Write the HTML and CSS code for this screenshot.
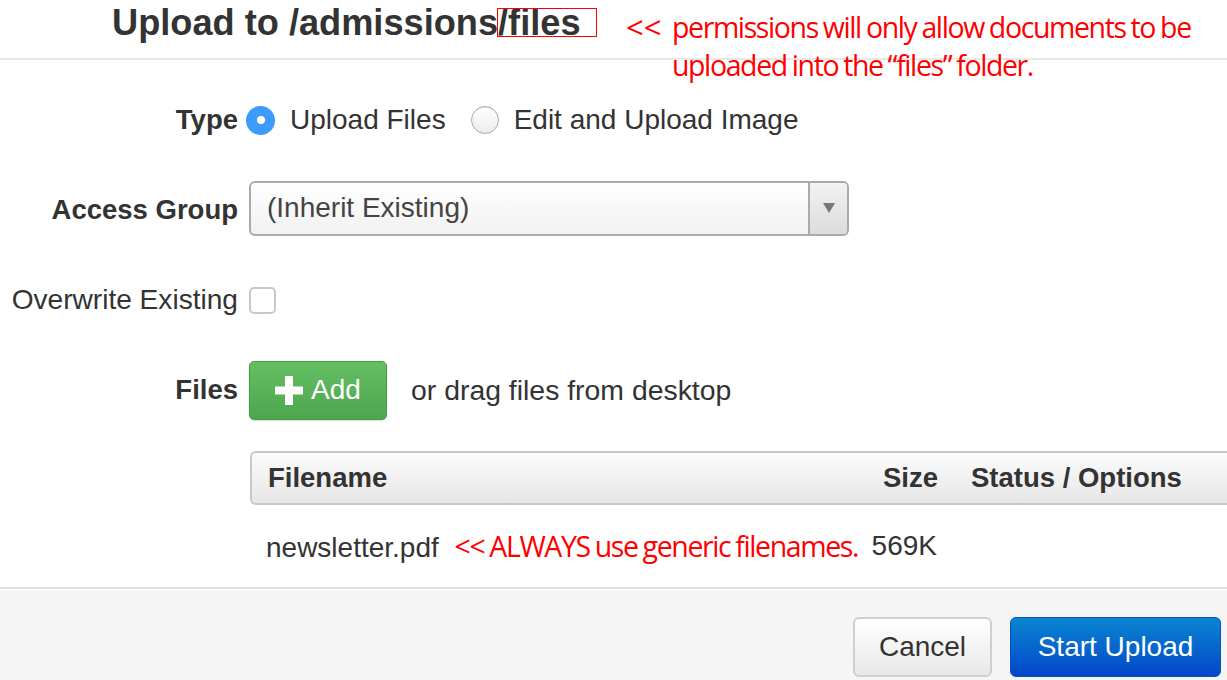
FILE: index.html
```html
<!DOCTYPE html>
<html>
<head>
<meta charset="utf-8">
<link rel="stylesheet" href="styles.css">
</head>
<body>
<div class="modal">
  <header class="modal-header">
    <h1 class="title">Upload to /admissions<span class="boxed">/files</span></h1>
    <div class="note note-top"><span class="note-arrows">&lt;&lt;</span><span class="note-text">permissions will only allow documents to be<br>uploaded into the “files” folder.</span></div>
  </header>

  <section class="form">
    <div class="row">
      <div class="label">Type</div>
      <div class="radios">
        <label class="opt"><span class="radio checked"></span><span>Upload Files</span></label>
        <label class="opt"><span class="radio"></span><span>Edit and Upload Image</span></label>
      </div>
    </div>
    <div class="row">
      <div class="label">Access Group</div>
      <div class="select">
        <span class="select-text">(Inherit Existing)</span>
        <span class="select-arrow"><span class="tri"></span></span>
      </div>
    </div>
    <div class="row">
      <div class="label normal">Overwrite Existing</div>
      <span class="checkbox"></span>
    </div>
    <div class="row">
      <div class="label">Files</div>
      <button class="btn-add"><svg class="plus" viewBox="0 0 28 29" width="28" height="29"><rect x="10" y="0" width="8" height="29" fill="#fff"/><rect x="0" y="10.5" width="28" height="8" fill="#fff"/></svg><span>Add</span></button>
      <span class="drag">or drag files from desktop</span>
    </div>
  </section>

  <section class="table">
    <div class="thead">
      <div class="c-name">Filename</div>
      <div class="c-size">Size</div>
      <div class="c-status">Status / Options</div>
    </div>
    <div class="trow">
      <div class="c-name">newsletter.pdf <span class="note note-inline">&lt;&lt; ALWAYS use generic filenames.</span></div>
      <div class="c-size">569K</div>
      <div class="c-status"></div>
    </div>
  </section>

  <footer class="modal-footer">
    <button class="btn btn-cancel">Cancel</button>
    <button class="btn btn-primary">Start Upload</button>
  </footer>
</div>
</body>
</html>
```

FILE: styles.css
```css
html, body {
  margin: 0;
  padding: 0;
}
body {
  width: 1227px;
  height: 680px;
  overflow: hidden;
  background: #fff;
  color: #333;
  font-family: "Liberation Sans", Arial, sans-serif;
}
.modal {
  width: 1227px;
  height: 680px;
  display: flex;
  flex-direction: column;
}

/* header */
.modal-header {
  position: relative;
  height: 58px;
  border-bottom: 2px solid #e8e8e8;
  padding-left: 112px;
  flex: none;
}
.title {
  margin: 0;
  padding-top: 5px;
  font-size: 36.2px;
  line-height: 36px;
  font-weight: bold;
  color: #333;
}
.boxed {
  position: relative;
  padding-right: 16px;
}
.boxed::after {
  content: "";
  position: absolute;
  left: -1px;
  right: 0;
  top: 6px;
  height: 27px;
  border: 1px solid #ff0000;
}

/* red annotations */
.note {
  font-family: "Open Sans", "Liberation Sans", sans-serif;
  color: #ff0000;
  font-size: 28.5px;
  letter-spacing: -1.4px;
  word-spacing: -1px;
}
.note-top {
  position: absolute;
  left: 626px;
  top: 8px;
  line-height: 38px;
  display: flex;
  white-space: nowrap;
}
.note-arrows {
  width: 46px;
  flex: none;
  letter-spacing: 0;
  font-size: 31px;
}

/* form */
.form {
  padding-top: 15px;
  flex: none;
}
.row {
  display: flex;
  align-items: center;
  height: 90px;
  gap: 11px;
}
.label {
  width: 238px;
  flex: none;
  text-align: right;
  font-size: 27.5px;
  font-weight: bold;
  color: #333;
}
.label.normal {
  font-weight: normal;
  font-size: 28.1px;
}
.radios {
  display: flex;
  align-items: center;
  gap: 25px;
  margin-left: -3px;
  font-size: 28px;
}
.opt {
  display: flex;
  align-items: center;
  gap: 15px;
}
.radio {
  width: 28px;
  height: 28px;
  border-radius: 50%;
  box-sizing: border-box;
  border: 1px solid #aaa;
  background: linear-gradient(#fff, #ececec);
  box-shadow: inset 0 1px 1px rgba(0,0,0,0.08);
  position: relative;
  flex: none;
}
.radio.checked {
  border: none;
  width: 29px;
  height: 29px;
  background: #3d9bfb;
  box-shadow: none;
}
.radio.checked::after {
  content: "";
  position: absolute;
  left: 10.5px;
  top: 10.5px;
  width: 8px;
  height: 8px;
  border-radius: 50%;
  background: #fff;
}

.select {
  width: 600px;
  height: 55px;
  margin-bottom: 4px;
  box-sizing: border-box;
  border: 2px solid #aaa;
  border-radius: 6px;
  background: linear-gradient(#fff, #f1f1f1);
  display: flex;
  align-items: stretch;
  overflow: hidden;
}
.select-text {
  flex: 1;
  display: flex;
  align-items: center;
  padding-left: 16px;
  font-size: 28px;
  color: #444;
}
.select-arrow {
  width: 37px;
  border-left: 2px solid #aaa;
  background: linear-gradient(#f2f2f2, #dcdcdc);
  display: flex;
  align-items: center;
  justify-content: center;
}
.tri {
  width: 0;
  height: 0;
  border-left: 6px solid transparent;
  border-right: 6px solid transparent;
  border-top: 10px solid #777;
}

.checkbox {
  width: 27px;
  height: 27px;
  box-sizing: border-box;
  border: 2px solid #c8c8c8;
  border-radius: 5px;
  background: #fff;
}

.btn-add {
  width: 138px;
  height: 59px;
  box-sizing: border-box;
  border: 1px solid #4a9a4a;
  border-radius: 5px;
  background: linear-gradient(#64c064, #4ea54e);
  color: #fff;
  font-family: "Liberation Sans", Arial, sans-serif;
  font-size: 28px;
  display: flex;
  align-items: center;
  padding: 0 0 0 25px;
  gap: 8px;
  box-shadow: 0 1px 2px rgba(0,0,0,0.15);
}
.plus {
  flex: none;
}
.drag {
  margin-left: 13px;
  font-size: 28.4px;
  color: #333;
}

/* table */
.table {
  margin: 16px 0 0 250px;
  width: 1000px;
  flex: none;
}
.thead {
  height: 50px;
  border: 2px solid #c8c8c8;
  border-right: none;
  border-radius: 6px 0 0 6px;
  background: linear-gradient(#fbfbfb, #e7e7e7);
  display: grid;
  grid-template-columns: 608px 78px 1fr;
  align-items: center;
  font-weight: bold;
  font-size: 27.5px;
  color: #333;
}
.thead .c-name {
  padding-left: 16px;
}
.c-size {
  text-align: right;
}
.c-status {
  padding-left: 33px;
}
.trow {
  height: 82px;
  display: grid;
  grid-template-columns: 610px 77px 1fr;
  align-items: center;
  font-size: 28px;
  color: #333;
}
.trow .c-name {
  padding-left: 16px;
  white-space: nowrap;
}
.note-inline {
  margin-left: 8px;
}

/* footer */
.modal-footer {
  flex: 1;
  border-top: 2px solid #dedede;
  box-shadow: inset 0 1px 0 #fff;
  background: #f5f5f5;
  display: flex;
  justify-content: flex-end;
  align-items: flex-start;
  gap: 18px;
  padding: 28px 6px 0 0;
}
.btn {
  height: 60px;
  box-sizing: border-box;
  border-radius: 6px;
  font-family: "Liberation Sans", Arial, sans-serif;
  font-size: 28px;
}
.btn-cancel {
  width: 139px;
  border: 2px solid #cfcfcf;
  background: linear-gradient(#fff, #e8e8e8);
  color: #333;
}
.btn-primary {
  width: 211px;
  border: 1px solid #0a4fb8;
  background: linear-gradient(#0a86d2, #0347c8);
  color: #fff;
}
```
